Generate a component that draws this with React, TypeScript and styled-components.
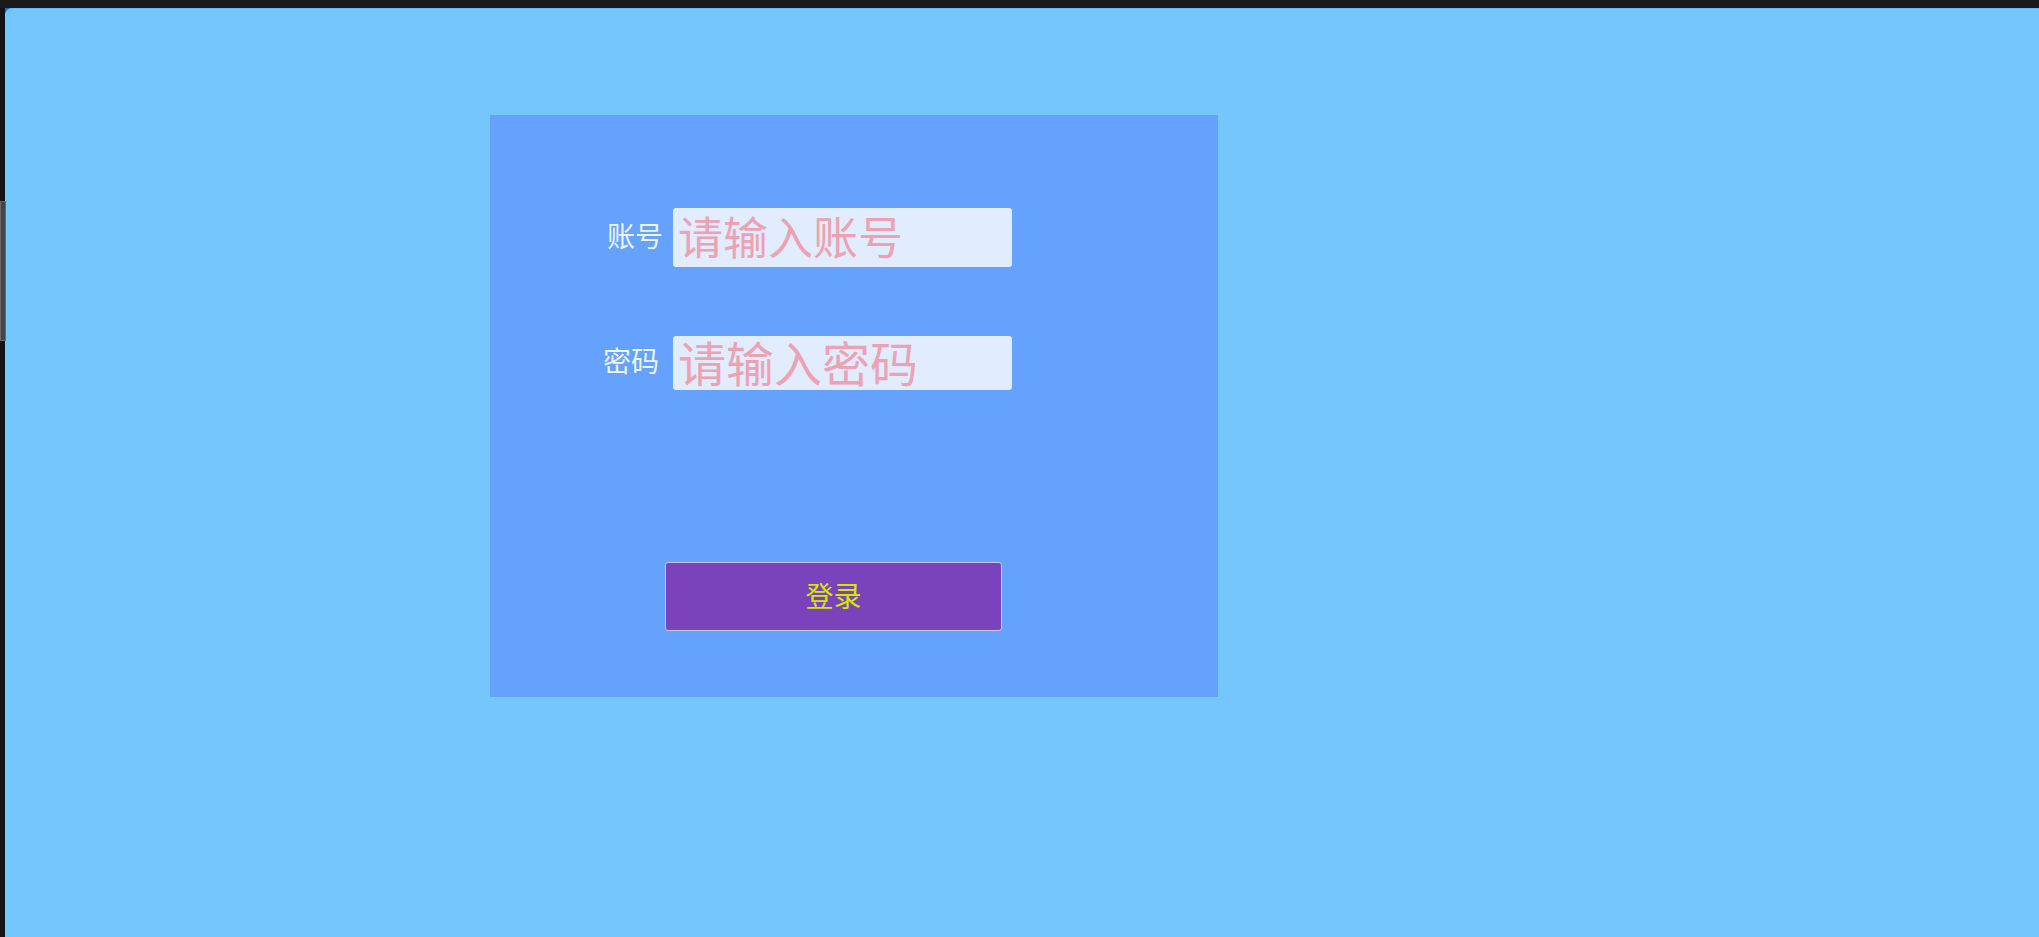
import React from "react";
import styled, { createGlobalStyle } from "styled-components";

const Global = createGlobalStyle`
  html, body { margin: 0; padding: 0; background: #151515; }
  body { font-family: "Noto Sans CJK SC", "Noto Sans", sans-serif; overflow: hidden; }
  * { box-sizing: border-box; }
`;

const Shell = styled.div`
  width: 2039px;
  height: 937px;
  display: flex;
  flex-direction: column;
  background: #151515;
  position: relative;
`;

const TopBar = styled.div`
  height: 8px;
  flex: none;
  background: #1a1a1a;
`;

const Body = styled.div`
  flex: 1;
  display: flex;
`;

const SideStrip = styled.div`
  width: 5px;
  flex: none;
  background: #141414;
`;

const ScrollThumb = styled.div`
  position: absolute;
  left: 0;
  top: 201px;
  width: 6px;
  height: 140px;
  background: #454545;
  border: 1px solid #6a6a6a;
`;

const Stage = styled.div`
  flex: 1;
  background: linear-gradient(135deg, #0a6fd8 0 5px, #76c6fe 5px);
  position: relative;
`;

const Viewport = styled.main`
  height: 100%;
  background: #76c6fe;
  border-top: 1px solid #6cb8fb;
  border-top-left-radius: 7px;
  padding: 106px 0 0 485px;
`;

const Card = styled.section`
  width: 728px;
  height: 582px;
  background: #64a2fe;
  display: flex;
  flex-direction: column;
  padding-top: 93px;
`;

const Row = styled.div<{ $left: number; $gap: number; $mt?: number }>`
  display: flex;
  align-items: center;
  padding-left: ${(p) => p.$left}px;
  gap: ${(p) => p.$gap}px;
  margin-top: ${(p) => p.$mt ?? 0}px;
`;

const Label = styled.label`
  font-size: 28px;
  line-height: 1;
  color: #eef4ff;
  white-space: nowrap;
  padding-bottom: 6px;
`;

const Field = styled.input<{ $h: number; $fs: number }>`
  width: 339px;
  height: ${(p) => p.$h}px;
  background: #e1ecfe;
  border: none;
  border-radius: 3px;
  padding: 0 0 5px 5px;
  font-family: "Noto Sans CJK SC", "Noto Sans", sans-serif;
  font-size: ${(p) => p.$fs}px;
  color: #333;
  outline: none;
  &::placeholder {
    color: #eda2b2;
  }
`;

const ButtonRow = styled.div`
  padding-left: 175px;
  margin-top: 172px;
`;

const LoginButton = styled.button`
  width: 337px;
  height: 69px;
  background: #7a43bc;
  border: 1px solid #c9c6e6;
  border-radius: 3px;
  color: #d4e800;
  font-family: "Noto Sans CJK SC", "Noto Sans", sans-serif;
  font-size: 28px;
  padding: 0 0 4px;
  cursor: pointer;
`;

export default function App() {
  return (
    <>
      <Global />
      <Shell>
        <TopBar />
        <Body>
          <SideStrip />
          <Stage>
            <Viewport>
              <Card>
                <Row $left={117} $gap={10}>
                  <Label>账号</Label>
                  <Field $h={59} $fs={45} placeholder="请输入账号" />
                </Row>
                <Row $left={113} $gap={14} $mt={69}>
                  <Label>密码</Label>
                  <Field $h={54} $fs={48} placeholder="请输入密码" />
                </Row>
                <ButtonRow>
                  <LoginButton>登录</LoginButton>
                </ButtonRow>
              </Card>
            </Viewport>
          </Stage>
        </Body>
        <ScrollThumb />
      </Shell>
    </>
  );
}
